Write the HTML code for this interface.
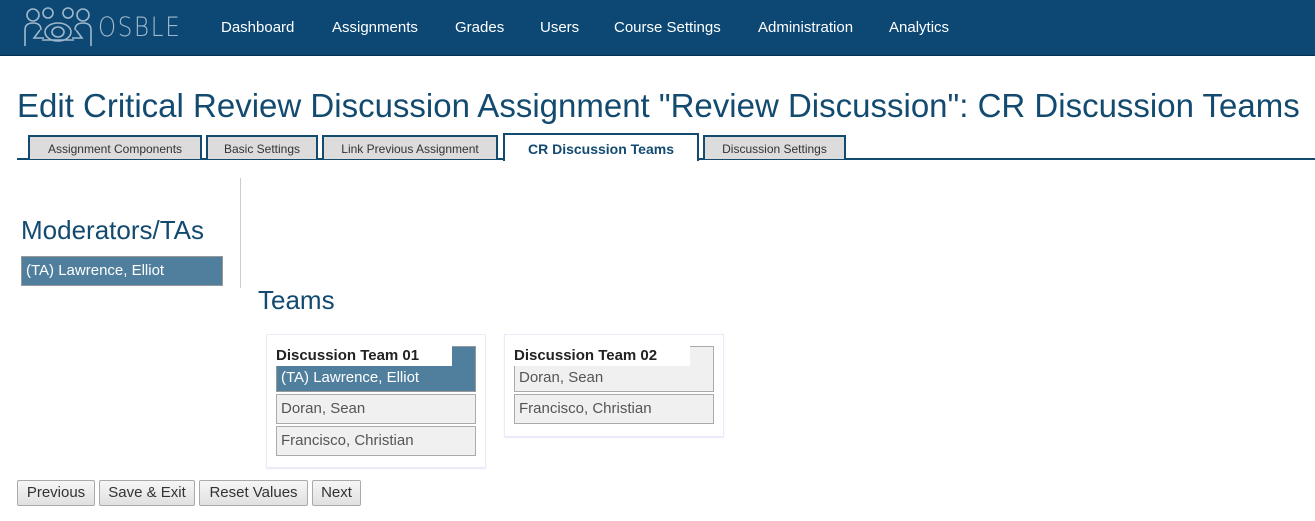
<!DOCTYPE html>
<html><head><style>
*{margin:0;padding:0;box-sizing:border-box}
body{width:1315px;height:521px;background:#fff;font-family:"Liberation Sans",sans-serif;position:relative;overflow:hidden}
.nav{position:absolute;left:0;top:0;width:1315px;height:56px;background:#0d4874;border-bottom:1px solid #06304f}
.nav a{position:absolute;top:19px;color:#fff;font-size:15px;text-decoration:none}
.logo{position:absolute;left:98px;top:12px;color:#9fb8cc;font-size:27px;letter-spacing:2px;font-weight:300;font-family:"DejaVu Sans",sans-serif;transform:scaleX(0.85);transform-origin:left}
h1{position:absolute;left:17px;top:87px;font-size:33px;font-weight:normal;color:#134a70;white-space:nowrap}
.line{position:absolute;left:17px;top:158px;width:1298px;height:2px;background:#134a70}
.tab{position:absolute;top:135px;height:24px;border:2px solid #134a70;border-bottom:none;background:#dcdcdc;font-size:12px;color:#333;text-align:center;line-height:25px}
.tab.act{top:133px;height:28px;background:#fff;font-weight:bold;font-size:14px;color:#134a70;line-height:28px}
.vl{position:absolute;left:240px;top:178px;width:1px;height:110px;background:#ccc}
h2{position:absolute;font-weight:normal;color:#134a70;font-size:26px}
.item{position:absolute;height:30px;border:1px solid #aaa;background:#f0f0f0;color:#555;font-size:15px;line-height:28px;padding-left:4px}
.item.sel{background:#507f9e;color:#fff;border-color:#999}
.box{position:absolute;background:#fff;border:1px solid #eaeaf8;box-shadow:0 1px 1px #e8e8f8}
.th{position:absolute;font-weight:bold;font-size:15px;color:#222;background:#fff;height:20px;line-height:20px;padding-left:9px}
.btn{position:absolute;top:480px;height:26px;border:1px solid #aaa;background:linear-gradient(#f6f6f6,#e0e0e0);font-size:15px;color:#333;text-align:center;line-height:24px;border-radius:2px}
</style></head><body>
<div class="nav">
<svg style="position:absolute;left:22px;top:6px" width="72" height="42" viewBox="0 0 72 42" fill="none" stroke="#9fb8cc" stroke-width="1.6">
<circle cx="11" cy="9" r="6"/><circle cx="26" cy="7" r="5"/><circle cx="46" cy="7" r="5"/><circle cx="61" cy="9" r="6"/>
<path d="M3 40V24q0-7 8-7t8 7M53 24q0-7 8-7t8 7v16"/>
<ellipse cx="36" cy="26" rx="13" ry="9"/><ellipse cx="36" cy="26" rx="6" ry="5"/>
<path d="M18 24l-6 8h10M54 24l6 8H50M20 34h32"/>
</svg>
<div class="logo">OSBLE</div>
<a style="left:221px">Dashboard</a><a style="left:332px">Assignments</a><a style="left:455px">Grades</a><a style="left:540px">Users</a><a style="left:614px">Course Settings</a><a style="left:758px">Administration</a><a style="left:889px">Analytics</a>
</div>
<h1>Edit Critical Review Discussion Assignment "Review Discussion": CR Discussion Teams</h1>
<div class="line"></div>
<div class="tab" style="left:28px;width:174px">Assignment Components</div>
<div class="tab" style="left:206px;width:112px">Basic Settings</div>
<div class="tab" style="left:322px;width:176px">Link Previous Assignment</div>
<div class="tab act" style="left:503px;width:196px">CR Discussion Teams</div>
<div class="tab" style="left:703px;width:143px">Discussion Settings</div>
<div class="vl"></div>
<h2 style="left:21px;top:215px">Moderators/TAs</h2>
<div class="item sel" style="left:21px;top:256px;width:202px">(TA) Lawrence, Elliot</div>
<h2 style="left:258px;top:285px">Teams</h2>
<div class="box" style="left:266px;top:334px;width:220px;height:134px"></div>
<div class="item sel" style="left:276px;top:346px;width:200px;height:46px;line-height:62px">(TA) Lawrence, Elliot</div>
<div class="th" style="left:267px;top:346px;width:185px">Discussion Team 01</div>
<div class="item" style="left:276px;top:394px;width:200px">Doran, Sean</div>
<div class="item" style="left:276px;top:426px;width:200px">Francisco, Christian</div>
<div class="box" style="left:504px;top:334px;width:220px;height:103px"></div>
<div class="item" style="left:514px;top:346px;width:200px;height:46px;line-height:62px">Doran, Sean</div>
<div class="th" style="left:505px;top:346px;width:185px">Discussion Team 02</div>
<div class="item" style="left:514px;top:394px;width:200px">Francisco, Christian</div>
<div class="btn" style="left:17px;width:78px">Previous</div>
<div class="btn" style="left:99px;width:96px">Save &amp; Exit</div>
<div class="btn" style="left:199px;width:109px">Reset Values</div>
<div class="btn" style="left:312px;width:49px">Next</div>
</body></html>
